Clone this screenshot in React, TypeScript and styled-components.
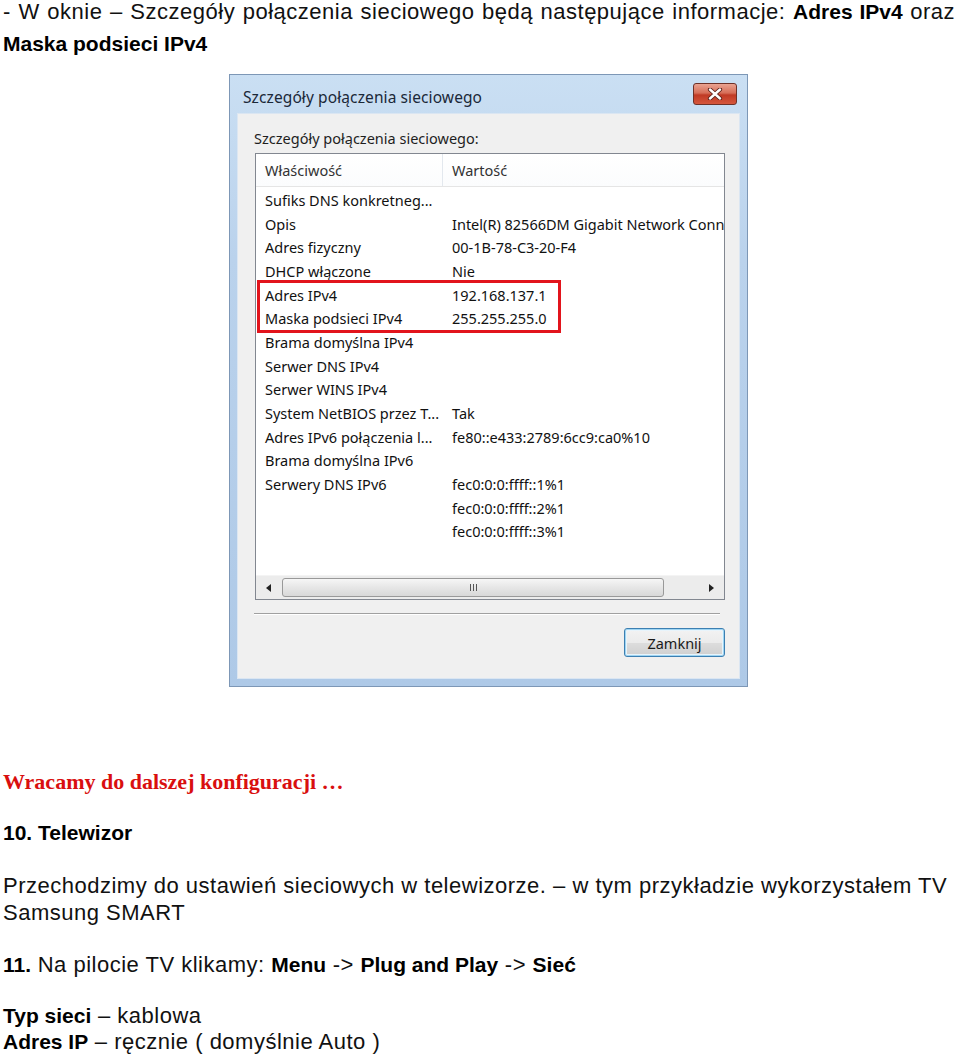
import React from 'react'
import styled, { createGlobalStyle } from 'styled-components'

const GlobalStyle = createGlobalStyle`
    body {
        margin: 0;
        background: #ffffff;
    }
`

const Page = styled.div`
    width: 960px;
    height: 1056px;
    overflow: hidden;
    padding-left: 3px;
    box-sizing: border-box;
    font-family: "Liberation Sans", Arial, sans-serif;
    font-size: 22px;
    letter-spacing: 0.5px;
    color: #111;
    white-space: nowrap;

    b {
        font-size: 21px;
        letter-spacing: 0;
        color: #000;
    }
`

const Para = styled.div<{ $top: number; $lh?: number; $ws?: number }>`
    margin-top: ${({ $top }) => $top}px;
    line-height: ${({ $lh }) => $lh || 26}px;
    word-spacing: ${({ $ws }) => $ws || 0}px;
`

const RedHeading = styled.div`
    margin-top: 82px;
    line-height: 26px;
    font-family: "Liberation Serif", "Times New Roman", serif;
    font-weight: bold;
    font-size: 22px;
    letter-spacing: 0;
    color: #d90f0f;
`

const Window = styled.div`
    margin: 18px 0 0 226px;
    width: 519px;
    height: 613px;
    box-sizing: border-box;
    border: 1px solid #7d97b6;
    background: linear-gradient(180deg, #cadff3 0%, #bad2ec 30%, #aec9e7 100%);
    padding: 0 7px 7px 7px;
    display: flex;
    flex-direction: column;
    font-family: "Noto Sans", "Open Sans", sans-serif;
    font-size: 14.5px;
    letter-spacing: 0;
    word-spacing: 0;
    white-space: nowrap;
`

const TitleBar = styled.div`
    height: 38px;
    display: flex;
    align-items: center;
    justify-content: space-between;
    padding-left: 6px;
`

const Title = styled.span`
    padding-top: 5px;
    font-size: 15.5px;
    letter-spacing: 0.1px;
    color: #1b2838;
`

const CloseButton = styled.div`
    width: 44px;
    height: 22px;
    margin-right: 3px;
    box-sizing: border-box;
    border: 1px solid #6e3128;
    border-radius: 3px;
    background: linear-gradient(180deg, #eaa391 0%, #d66e58 45%, #c03a25 55%, #d5563c 100%);
    display: flex;
    align-items: center;
    justify-content: center;
`

const Client = styled.div`
    flex: 1;
    background: #f0f0f0;
    border: 1px solid #dbe6f2;
    padding: 14px 14px 0 16px;
    display: flex;
    flex-direction: column;
`

const Label = styled.div`
    line-height: 20px;
    color: #1e1e1e;
`

const ListBox = styled.div`
    margin: 5px 0 0 1px;
    height: 447px;
    box-sizing: border-box;
    border: 1px solid #828790;
    background: #fff;
    display: flex;
    flex-direction: column;
`

const Header = styled.div`
    height: 32px;
    display: flex;
    border-bottom: 1px solid #e5e5e5;
    background: linear-gradient(180deg, #ffffff 0%, #fbfcfd 100%);
`

const HeadCell = styled.div<{ $w?: number }>`
    ${({ $w }) => ($w ? `width: ${$w}px; border-right: 1px solid #e3e8ee;` : 'flex: 1;')}
    padding-left: 9px;
    display: flex;
    align-items: center;
    color: #333;
`

const Body = styled.div`
    flex: 1;
    position: relative;
    overflow: hidden;
    padding-top: 1px;
`

const Row = styled.div`
    height: 23.7px;
    display: flex;
    align-items: center;
    color: #111;
`

const Cell = styled.div<{ $w?: number }>`
    ${({ $w }) => ($w ? `width: ${$w}px;` : 'flex: 1;')}
    padding-left: 9px;
    overflow: hidden;
`

const Highlight = styled.div`
    position: absolute;
    left: 1px;
    top: 93px;
    width: 304px;
    height: 53px;
    box-sizing: border-box;
    border: 3px solid #e2141c;
`

const ScrollBar = styled.div`
    height: 23px;
    display: flex;
    align-items: center;
    background: #ececec;
    border-top: 1px solid #f4f4f4;
`

const Arrow = styled.div`
    width: 25px;
    height: 100%;
    display: flex;
    align-items: center;
    justify-content: center;
`

const Thumb = styled.div`
    width: 382px;
    height: 19px;
    margin-left: 1px;
    box-sizing: border-box;
    border: 1px solid #999;
    border-radius: 3px;
    background: linear-gradient(180deg, #f6f6f6 0%, #e6e6e6 50%, #d8d8d8 100%);
    display: flex;
    align-items: center;
    justify-content: center;
`

const Track = styled.div`
    flex: 1;
`

const Separator = styled.div`
    margin: 13px 5px 0 0;
    height: 1px;
    background: #a0a0a0;
    border-bottom: 1px solid #ffffff;
`

const Button = styled.div`
    align-self: flex-end;
    margin: 13px 0 0 0;
    width: 101px;
    height: 29px;
    box-sizing: border-box;
    border: 1px solid #3c7fb1;
    border-radius: 3px;
    box-shadow: inset 0 0 0 1px #9fd5f3, inset 0 0 0 2px #e8f4fb;
    background: linear-gradient(180deg, #f3f3f3 0%, #ebebeb 50%, #dddddd 51%, #cfcfcf 100%);
    display: flex;
    align-items: center;
    justify-content: center;
    color: #1a1a1a;
`

const rows: [string, string][] = [
    ['Sufiks DNS konkretneg...', ''],
    ['Opis', 'Intel(R) 82566DM Gigabit Network Connection'],
    ['Adres fizyczny', '00-1B-78-C3-20-F4'],
    ['DHCP włączone', 'Nie'],
    ['Adres IPv4', '192.168.137.1'],
    ['Maska podsieci IPv4', '255.255.255.0'],
    ['Brama domyślna IPv4', ''],
    ['Serwer DNS IPv4', ''],
    ['Serwer WINS IPv4', ''],
    ['System NetBIOS przez T...', 'Tak'],
    ['Adres IPv6 połączenia l...', 'fe80::e433:2789:6cc9:ca0%10'],
    ['Brama domyślna IPv6', ''],
    ['Serwery DNS IPv6', 'fec0:0:0:ffff::1%1'],
    ['', 'fec0:0:0:ffff::2%1'],
    ['', 'fec0:0:0:ffff::3%1'],
]

const DetailsDialog = () => (
    <Window>
        <TitleBar>
            <Title>Szczegóły połączenia sieciowego</Title>
            <CloseButton>
                <svg width="16" height="12" viewBox="0 0 16 12">
                    <path d="M3 1.5 L13 10.5 M13 1.5 L3 10.5" stroke="#5a2019" strokeWidth="4.2" strokeLinecap="round" />
                    <path d="M3 1.5 L13 10.5 M13 1.5 L3 10.5" stroke="#ffffff" strokeWidth="2.4" strokeLinecap="round" />
                </svg>
            </CloseButton>
        </TitleBar>
        <Client>
            <Label>Szczegóły połączenia sieciowego:</Label>
            <ListBox>
                <Header>
                    <HeadCell $w={177}>Właściwość</HeadCell>
                    <HeadCell>Wartość</HeadCell>
                </Header>
                <Body>
                    {rows.map(([k, v], i) => (
                        <Row key={i}>
                            <Cell $w={178}>{k}</Cell>
                            <Cell>{v}</Cell>
                        </Row>
                    ))}
                    <Highlight />
                </Body>
                <ScrollBar>
                    <Arrow>
                        <svg width="5" height="8" viewBox="0 0 5 8"><path d="M5 0 L0 4 L5 8 Z" fill="#222" /></svg>
                    </Arrow>
                    <Thumb>
                        <svg width="9" height="7" viewBox="0 0 9 7">
                            <path d="M1.5 0 V7 M4.5 0 V7 M7.5 0 V7" stroke="#555" strokeWidth="1" />
                        </svg>
                    </Thumb>
                    <Track />
                    <Arrow>
                        <svg width="5" height="8" viewBox="0 0 5 8"><path d="M0 0 L5 4 L0 8 Z" fill="#222" /></svg>
                    </Arrow>
                </ScrollBar>
            </ListBox>
            <Separator />
            <Button>Zamknij</Button>
        </Client>
    </Window>
)

const App = () => {
    return (
        <Page>
            <GlobalStyle />
            <Para $top={0} $lh={24} $ws={1}>
                - W oknie – Szczegóły połączenia sieciowego będą następujące informacje: <b>Adres IPv4</b> oraz
            </Para>
            <Para $top={8} $lh={24}>
                <b>Maska podsieci IPv4</b>
            </Para>
            <DetailsDialog />
            <RedHeading>Wracamy do dalszej konfiguracji …</RedHeading>
            <Para $top={25}>
                <b>10. Telewizor</b>
            </Para>
            <Para $top={26} $lh={27}>
                Przechodzimy do ustawień sieciowych w telewizorze. – w tym przykładzie wykorzystałem TV
                <br />
                Samsung SMART
            </Para>
            <Para $top={26}>
                <b>11.</b> Na pilocie TV klikamy: <b>Menu</b> -&gt; <b>Plug and Play</b> -&gt; <b>Sieć</b>
            </Para>
            <Para $top={25}>
                <b>Typ sieci</b> – kablowa
                <br />
                <b>Adres IP</b> – ręcznie ( domyślnie Auto )
            </Para>
        </Page>
    )
}

export default App
